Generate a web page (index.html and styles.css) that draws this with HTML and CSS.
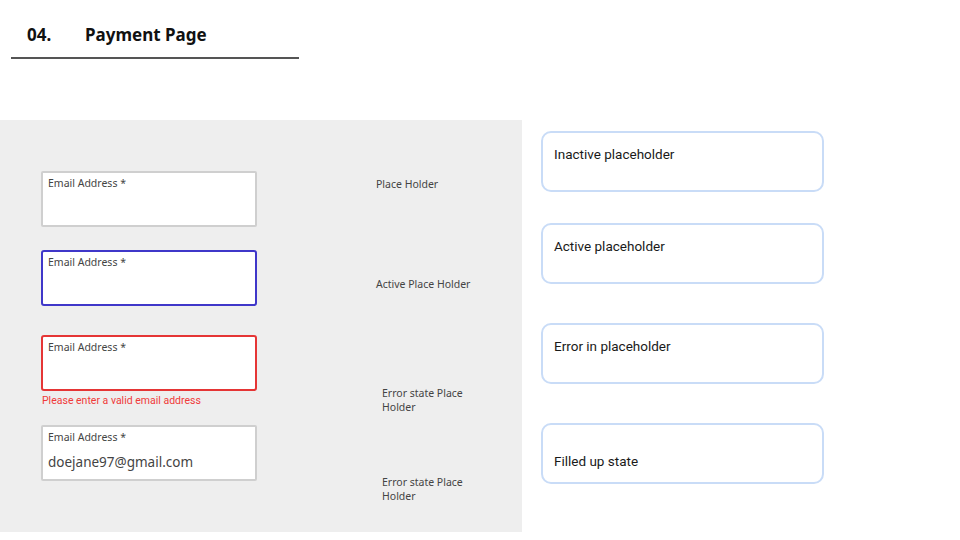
FILE: index.html
```html
<!DOCTYPE html>
<html lang="en">
<head>
    <meta charset="UTF-8">
    <meta name="viewport" content="width=device-width, initial-scale=1.0">
    <title>Payment Page</title>
    <link rel="stylesheet" href="styles.css">
</head>
<body>
    <div class="page-header">
        <h1><span class="number">04.</span>Payment Page</h1>
    </div>
    <div class="main">
        <div class="states-panel">
            <div class="state-row row-inactive">
                <div class="field">
                    <span class="field-label">Email Address *</span>
                </div>
                <p class="note note-inactive">Place Holder</p>
            </div>
            <div class="state-row row-active">
                <div class="field active">
                    <span class="field-label">Email Address *</span>
                </div>
                <p class="note note-active">Active Place Holder</p>
            </div>
            <div class="state-row row-error">
                <div class="field-group">
                    <div class="field error">
                        <span class="field-label">Email Address *</span>
                    </div>
                    <p class="error-text">Please enter a valid email address</p>
                </div>
                <p class="note note-error">Error state Place Holder</p>
            </div>
            <div class="state-row row-filled">
                <div class="field">
                    <span class="field-label">Email Address *</span>
                    <span class="field-value">doejane97@gmail.com</span>
                </div>
                <p class="note note-filled">Error state Place Holder</p>
            </div>
        </div>
        <div class="state-list">
            <div class="state-card">Inactive placeholder</div>
            <div class="state-card">Active placeholder</div>
            <div class="state-card">Error in placeholder</div>
            <div class="state-card bottom">Filled up state</div>
        </div>
    </div>
</body>
</html>
```

FILE: styles.css
```css
body {
    margin: 0;
    background-color: #ffffff;
    font-family: "Noto Sans", Arial, sans-serif;
    color: #222;
}
.page-header {
    width: 288px;
    margin-left: 11px;
    padding-top: 23px;
    border-bottom: 2px solid #555;
}
.page-header h1 {
    margin: 0 0 10px 16px;
    font-size: 17px;
    font-weight: bold;
    line-height: 24px;
    color: #111;
}
.page-header .number {
    display: inline-block;
    width: 58px;
}
.main {
    display: flex;
    margin-top: 61px;
}
.states-panel {
    width: 522px;
    height: 412px;
    box-sizing: border-box;
    background-color: #eeeeee;
    padding: 51px 0 0 41px;
}
.state-row {
    display: flex;
    align-items: flex-start;
}
.row-active {
    margin-top: 23px;
}
.row-error {
    margin-top: 29px;
}
.row-filled {
    margin-top: 11px;
}
.field {
    width: 216px;
    height: 56px;
    box-sizing: border-box;
    background-color: #ffffff;
    border: 2px solid #cfcfcf;
    border-radius: 2px;
    padding: 3px 0 0 5px;
    display: flex;
    flex-direction: column;
}
.field.active {
    border-color: #3f37c9;
    border-radius: 3px;
}
.field.error {
    border-color: #e53535;
    border-radius: 3px;
}
.field-label {
    font-size: 10.5px;
    line-height: 14px;
    color: #444;
}
.field-value {
    margin-top: 9px;
    font-size: 13.5px;
    line-height: 18px;
    color: #444;
}
.error-text {
    margin: 3px 0 0 1px;
    font-family: Roboto, Arial, sans-serif;
    font-size: 10.5px;
    line-height: 14px;
    color: #f03a3a;
}
.note {
    margin: 0;
    width: 90px;
    font-size: 10.5px;
    line-height: 14px;
    color: #444;
}
.note-inactive {
    margin: 6px 0 0 119px;
}
.note-active {
    width: 110px;
    margin: 27px 0 0 119px;
}
.note-error {
    margin: 51px 0 0 125px;
}
.note-filled {
    margin: 50px 0 0 125px;
}
.state-list {
    margin-left: 19px;
    padding-top: 11px;
}
.state-card {
    width: 283px;
    height: 61px;
    box-sizing: border-box;
    border: 2px solid #c9dcf7;
    border-radius: 10px;
    padding: 11px 0 0 11px;
    font-family: Roboto, Arial, sans-serif;
    font-size: 13.5px;
    line-height: 20px;
    color: #1a1a1a;
    margin-bottom: 39px;
}
.state-card:first-child {
    margin-bottom: 31px;
}
.state-card.bottom {
    padding-top: 26px;
}
```
